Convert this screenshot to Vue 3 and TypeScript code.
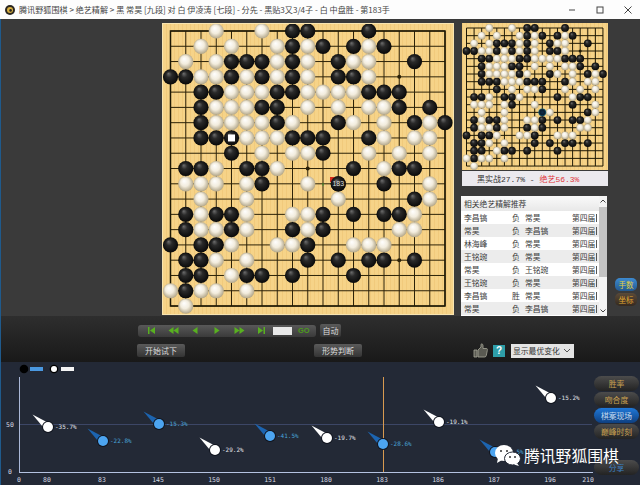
<script setup lang="ts">
const B: number[][] = [
  [8,9,13],[8,10,12,14],[4,5,6,8,11,16],[0,1,4,6,8,11,12],[2,3,7,8,13,14,15],
  [2,6,7,15,17],[2,7,11,16,18],[2,3,4,8,9,10,13],[4,10],[1,2,5,6,12,15,16],
  [6,11,14],[16],[1,3,4,10,12,14,15],[1,4,8,10],[0,2,3,9],
  [1,2,9,11,13,14,16],[1,2,5,6,8,12],[1],[]
]
const W: number[][] = [
  [3,6],[2,4,7,9,13],[1,3,7,9,12,13],[2,3,5,7,9,13],[4,5,6,9,10,11,12],
  [3,4,5,9,11,13,14],[3,4,5,6,8,12,14,17],[5,6,7,14,16,17],[6,8,9,13,15,17],[3,7,14],
  [1,2,3,5,9,17],[2,5,11,17],[2,5,8,9,16],[2,3,5,9,15,16],[4,7,8,12,13,14],
  [3,5],[4],[0,2,3,5],[1]
]
type Stone = { c: number; r: number; k: string }
const stones: Stone[] = []
B.forEach((row, r) => row.forEach((c) => stones.push({ c, r, k: 'b' })))
W.forEach((row, r) => row.forEach((c) => stones.push({ c, r, k: 'w' })))
const miniStones = stones.filter((s) => !(s.c === 11 && s.r === 10))

const idx = Array.from({ length: 19 }, (_, i) => i)
const stars: [number, number][] = []
for (const a of [3, 9, 15]) for (const b of [3, 9, 15]) stars.push([a, b])

const bx = (c: number) => 8.5 + c * 15.25
const by = (r: number) => 8 + r * 15.28
const mx = (c: number) => 4.5 + c * 7.58
const my = (r: number) => 5 + r * 7.67

const rows = [
  ['李昌镐', '负', '常昊'], ['常昊', '负', '李昌镐'], ['林海峰', '负', '常昊'], ['王铭琬', '负', '常昊'],
  ['常昊', '负', '王铭琬'], ['王铭琬', '负', '常昊'], ['李昌镐', '胜', '常昊'], ['常昊', '负', '李昌镐']
]

const ticks: [string, number][] = [
  ['0', 19], ['80', 47], ['83', 102], ['145', 158], ['150', 214], ['151', 270],
  ['180', 326], ['183', 382], ['186', 438], ['187', 494], ['196', 550], ['210', 588]
]
const pins = [
  { x: 48, y: 65, t: '-35.7%', k: 'w' }, { x: 103, y: 79, t: '-22.8%', k: 'b' },
  { x: 159, y: 62, t: '-15.3%', k: 'b' }, { x: 215, y: 88, t: '-29.2%', k: 'w' },
  { x: 270, y: 74, t: '-41.5%', k: 'b' }, { x: 327, y: 76, t: '-19.7%', k: 'w' },
  { x: 383, y: 82, t: '-28.6%', k: 'b' }, { x: 439, y: 60, t: '-19.1%', k: 'w' },
  { x: 495, y: 90, t: '-24.5%', k: 'b' }, { x: 551, y: 36, t: '-15.2%', k: 'w' }
]
const wedge = (x: number, y: number) =>
  `${x - 15.5},${y - 12.5} ${x + 2.5},${y - 3} ${x - 2.5},${y + 3}`
</script>

<template>
  <div class="app">
    <header class="titlebar">
      <svg class="logo" width="10" height="10" viewBox="0 0 10 10">
        <circle cx="5" cy="5" r="5" fill="#2a2620" />
        <circle cx="5" cy="5" r="3" fill="#d8b040" />
        <circle cx="5.6" cy="5.4" r="1.3" fill="#2a2620" />
      </svg>
      <span class="title">腾讯野狐围棋 &gt; 绝艺精解 &gt; 黑 常昊 [九段] 对 白 伊凌涛 [七段] - 分先 - 黑贴3又3/4子 - 白 中盘胜 - 第183手</span>
      <div class="winbtns">
        <svg width="8" height="8" viewBox="0 0 8 8"><path d="M1 4h6" stroke="#444" /></svg>
        <svg width="8" height="8" viewBox="0 0 8 8"><rect x="1" y="1" width="6" height="6" fill="none" stroke="#444" /></svg>
        <svg width="8" height="8" viewBox="0 0 8 8"><path d="M0.5 0.5l7 7M7.5 0.5l-7 7" stroke="#444" /></svg>
      </div>
    </header>

    <main class="main">
      <svg class="board" width="292" height="292" viewBox="0 0 292 292">
        <defs>
          <radialGradient id="gb" cx="50%" cy="50%" r="55%" fx="36%" fy="28%">
            <stop offset="0" stop-color="#6e6e6e" />
            <stop offset="0.35" stop-color="#2a2a2a" />
            <stop offset="1" stop-color="#050505" />
          </radialGradient>
          <radialGradient id="gw" cx="50%" cy="50%" r="55%" fx="38%" fy="30%">
            <stop offset="0" stop-color="#ffffff" />
            <stop offset="0.5" stop-color="#f2ecdd" />
            <stop offset="1" stop-color="#a99c7c" />
          </radialGradient>
          <radialGradient id="gt" cx="50%" cy="50%" r="55%">
            <stop offset="0" stop-color="#0b2a4a" />
            <stop offset="0.6" stop-color="#0a1c2e" />
            <stop offset="1" stop-color="#1a7a9a" />
          </radialGradient>
          <pattern id="wood" width="4" height="4" patternUnits="userSpaceOnUse">
            <rect width="4" height="4" fill="#f6d388" />
            <rect width="1" height="4" fill="#f1ca7c" />
          </pattern>
        </defs>
        <rect width="292" height="292" fill="url(#wood)" />
        <g stroke="#2c2208" stroke-width="1">
          <line v-for="i in idx" :key="'v' + i" :x1="bx(i)" y1="8" :x2="bx(i)" y2="283" />
          <line v-for="i in idx" :key="'h' + i" x1="8.5" :y1="by(i)" x2="283" :y2="by(i)" />
        </g>
        <rect x="8.5" y="8" width="274.5" height="275" fill="none" stroke="#1e1804" stroke-width="1.5" />
        <circle v-for="s in stars" :key="s.join()" :cx="bx(s[0])" :cy="by(s[1])" r="2" fill="#2c2208" />
        <circle
          v-for="s in stones"
          :key="s.c + '-' + s.r"
          :cx="bx(s.c)"
          :cy="by(s.r)"
          r="7.6"
          :fill="s.k === 'b' ? 'url(#gb)' : 'url(#gw)'"
        />
        <rect :x="bx(4) - 3.5" :y="by(7) - 3.5" width="7" height="7" fill="#fff" />
        <rect x="168" y="154" width="5" height="5" fill="#d42a1a" />
        <circle :cx="bx(11)" :cy="by(10)" r="7.6" fill="url(#gb)" />
        <text :x="bx(11)" :y="by(10) + 2.5" class="movenum">183</text>
        <line x1="161" y1="160" x2="161" y2="163" stroke="#4a9a30" />
      </svg>

      <aside class="side">
        <div class="mini">
          <svg class="miniboard" width="146" height="147" viewBox="0 0 146 147">
            <rect width="146" height="147" fill="url(#wood)" />
            <g stroke="#1e1804" stroke-width="1">
              <line v-for="i in idx" :key="'mv' + i" :x1="mx(i)" y1="5" :x2="mx(i)" y2="143" />
              <line v-for="i in idx" :key="'mh' + i" x1="4.5" :y1="my(i)" x2="141" :y2="my(i)" />
            </g>
            <circle v-for="s in stars" :key="s.join()" :cx="mx(s[0])" :cy="my(s[1])" r="1.5" fill="#1e1804" />
            <circle
              v-for="s in miniStones"
              :key="s.c + '-' + s.r"
              :cx="mx(s.c)"
              :cy="my(s.r)"
              r="3.9"
              :fill="s.k === 'b' ? 'url(#gb)' : 'url(#gw)'"
            />
            <circle :cx="mx(10)" :cy="my(11)" r="3.9" fill="url(#gt)" />
          </svg>
          <div class="caption">黑实战27.7% - <span class="red">绝艺56.3%</span></div>
        </div>

        <div class="list">
          <div class="listbody">
            <div class="listhead">相关绝艺精解推荐</div>
            <div v-for="(r, i) in rows" :key="i" class="row">
              <span class="c1">{{ r[0] }}</span>
              <span class="c2">{{ r[1] }}</span>
              <span class="c3">{{ r[2] }}</span>
              <span class="c4">第四届</span>
            </div>
          </div>
          <div class="scroll">
            <svg width="8" height="11" viewBox="0 0 8 11"><path d="M1.5 6.5L4 4l2.5 2.5" fill="none" stroke="#444" /></svg>
            <div class="thumb"></div>
            <svg class="down" width="8" height="11" viewBox="0 0 8 11"><path d="M1.5 4.5L4 7l2.5-2.5" fill="none" stroke="#444" /></svg>
          </div>
        </div>
      </aside>

      <div class="sidepills">
        <div class="mpill blue">手数</div>
        <div class="mpill gold">坐标</div>
      </div>
    </main>

    <section class="controls">
      <div class="ctl1">
        <div class="transport">
          <span class="tb"><svg width="9" height="7" viewBox="0 0 9 7"><path d="M1 0h1.5v7H1zM8 0v7L3 3.5z" /></svg></span>
          <span class="tb"><svg width="11" height="7" viewBox="0 0 11 7"><path d="M5.5 0v7L0.5 3.5zM10.5 0v7L5.5 3.5z" /></svg></span>
          <span class="tb"><svg width="6" height="7" viewBox="0 0 6 7"><path d="M5.5 0v7L0.5 3.5z" /></svg></span>
          <span class="tb"><svg width="6" height="7" viewBox="0 0 6 7"><path d="M0.5 0v7l5-3.5z" /></svg></span>
          <span class="tb"><svg width="11" height="7" viewBox="0 0 11 7"><path d="M0.5 0v7l5-3.5zM5.5 0v7l5-3.5z" /></svg></span>
          <span class="tb"><svg width="9" height="7" viewBox="0 0 9 7"><path d="M1 0v7l5-3.5zM6.5 0H8v7H6.5z" /></svg></span>
          <span class="num"></span>
          <span class="go">GO</span>
        </div>
        <span class="btn auto">自动</span>
      </div>
      <div class="ctl2">
        <span class="btn wide">开始试下</span>
        <span class="btn wide judge">形势判断</span>
        <svg class="thumbup" width="15" height="15" viewBox="0 0 15 15">
          <path d="M1 7h3v7H1zM5 7l3-3V1.5C8 .6 10 .6 10 2.500V5.500h3.500c1 0 1 1 .8 2l-1 5c-.2 1-.8 1.500-1.800 1.500H5z" fill="#5a5a52" stroke="#a8a89a" stroke-width=".8" />
        </svg>
        <span class="help">?</span>
        <div class="select">
          <span>显示最优变化</span>
          <svg width="8" height="6" viewBox="0 0 8 6"><path d="M1 1l3 3 3-3" fill="none" stroke="#555" /></svg>
        </div>
      </div>
    </section>

    <section class="chartwrap">
      <svg class="chart" width="593" height="123" viewBox="0 0 593 123">
        <circle cx="24" cy="7" r="4.300" fill="#000" />
        <rect x="30" y="5" width="13" height="4" fill="#4a98e0" />
        <circle cx="54" cy="7" r="4.300" fill="#000" />
        <circle cx="54" cy="7" r="3" fill="#fff" />
        <rect x="61" y="5" width="13" height="4" fill="#f4f4f4" />

        <line x1="20" y1="62.500" x2="592" y2="62.500" stroke="#3c4666" />
        <line x1="19.500" y1="15" x2="19.500" y2="110" stroke="#aab8d8" />
        <line x1="19" y1="110.500" x2="593" y2="110.500" stroke="#b4c2e0" />
        <line x1="383.500" y1="15" x2="383.500" y2="110" stroke="#d89a50" />

        <text x="10" y="65" class="axis">50</text>
        <text x="10" y="111.500" class="axis">0</text>
        <text v-for="t in ticks" :key="t[0]" :x="t[1]" y="119.500" class="axis">{{ t[0] }}</text>

        <g v-for="p in pins" :key="p.x">
          <polygon :points="wedge(p.x, p.y)" :fill="p.k === 'w' ? '#fff' : '#1c64b0'" />
          <circle :cx="p.x" :cy="p.y" r="6" fill="#10141e" />
          <circle :cx="p.x" :cy="p.y" r="5" :fill="p.k === 'w' ? '#fff' : '#4ca4f0'" />
          <text :x="p.x + 7" :y="p.y + 2" class="pct" :class="{ bluet: p.k === 'b' }">{{ p.t }}</text>
        </g>
      </svg>
      <div class="pills">
        <div class="pill">胜率</div>
        <div class="pill">吻合度</div>
        <div class="pill active">棋案现场</div>
        <div class="pill">巅峰时刻</div>
        <div class="pill share">分享</div>
      </div>
      <div class="watermark">
        <svg width="26" height="21" viewBox="0 0 26 21">
          <ellipse cx="9" cy="8" rx="9" ry="8" fill="#fff" />
          <path d="M3 13l-1 5 5-3z" fill="#fff" />
          <circle cx="6" cy="6" r="1" fill="#333" />
          <circle cx="12" cy="6" r="1" fill="#333" />
          <ellipse cx="17.500" cy="13.500" rx="8" ry="6.500" fill="#fff" stroke="#232936" />
          <path d="M22 18l2 3-5-1.500z" fill="#fff" />
          <circle cx="15" cy="12" r="1" fill="#333" />
          <circle cx="20" cy="12" r="1" fill="#333" />
        </svg>
        <span>腾讯野狐围棋</span>
      </div>
    </section>
  </div>
</template>

<style>
html, body { margin: 0; background: #3a3a3a; }
</style>

<style scoped>
.app {
  position: relative;
  width: 640px;
  height: 485px;
  overflow: hidden;
  display: flex;
  flex-direction: column;
  background: #3a3a3a;
  font-family: "Noto Sans CJK SC", "Liberation Sans", sans-serif;
  font-size: 8px;
}
.app::after {
  content: "";
  position: absolute;
  inset: 19px auto 0 0;
  width: 1px;
  background: #1f5a8c;
}
.titlebar {
  height: 19px;
  background: #fdfdfd;
  display: flex;
  align-items: center;
  padding: 0 8px 0 5px;
  color: #454545;
  flex: none;
}
.logo { flex: none; }
.title { margin-left: 4px; font-size: 8.100px; white-space: nowrap; }
.winbtns {
  margin-left: auto;
  display: flex;
  gap: 20px;
}
.main {
  flex: none;
  height: 293px;
  padding: 4px 0 0 162px;
  display: flex;
  box-sizing: content-box;
}
.board { display: block; flex: none; outline: 1px solid #f8e4b0; outline-offset: -1px; }
.side {
  flex: none;
  width: 147px;
  margin-left: 7px;
  display: flex;
  flex-direction: column;
}
.mini { margin-left: 1px; width: 146px; }
.miniboard { display: block; }
.caption {
  height: 15px;
  margin-top: 1px;
  padding-left: 15px;
  background: #ebe9ee;
  color: #333;
  display: flex;
  align-items: center;
  white-space: pre;
  font-family: "Liberation Mono", "Noto Sans CJK SC", monospace;
  font-size: 8px;
}
.red { color: #e0383c; }
.list {
  margin-top: 10px;
  width: 146px;
  height: 120px;
  background: #fff;
  display: flex;
  color: #3a3a3a;
}
.listbody { width: 138px; overflow: hidden; }
.listhead {
  height: 15px;
  line-height: 15px;
  padding-left: 3px;
  background: linear-gradient(#fafafa, #e8e8e8);
  font-size: 7.800px;
}
.row {
  height: 13px;
  display: flex;
  align-items: center;
  white-space: nowrap;
  padding-left: 3px;
  font-size: 7.800px;
}
.row:nth-child(odd) { background: #ececec; }
.c1 { flex: none; width: 48px; }
.c2 { flex: none; width: 13px; }
.c3 { flex: none; width: 47px; }
.c4 { flex: none; padding-right: 1px; border-right: 1px solid #555; line-height: 8px; }
.scroll {
  width: 8px;
  background: #f4f4f4;
  display: flex;
  flex-direction: column;
}
.scroll svg { flex: none; display: block; }
.thumb { height: 70px; background: #c4c4c4; }
.down { margin-top: auto; }
.sidepills {
  flex: none;
  width: 24px;
  margin-left: 7px;
  align-self: flex-end;
  margin-bottom: 10px;
  display: flex;
  flex-direction: column;
  gap: 2px;
}
.mpill {
  height: 13px;
  width: 22px;
  border-radius: 5px;
  text-align: center;
  line-height: 13px;
  font-size: 7.500px;
}
.mpill.blue { background: linear-gradient(#3d8ad0, #24598e); color: #e0d040; }
.mpill.gold { background: linear-gradient(#5a4a38, #352a20); color: #e0a830; }
.controls {
  flex: none;
  height: 46px;
  background: linear-gradient(#2e2e2e, #191919);
  padding-top: 8px;
  box-sizing: border-box;
  display: flex;
  flex-direction: column;
}
.ctl1 {
  height: 13px;
  margin-left: 138px;
  display: flex;
  align-items: center;
}
.transport {
  width: 178px;
  height: 12px;
  box-sizing: border-box;
  padding-left: 2px;
  border-radius: 3px;
  background: linear-gradient(#585858, #3a3a3a);
  display: flex;
  align-items: center;
}
.tb { width: 22px; display: flex; justify-content: center; align-items: center; }
.tb svg { fill: #58b020; }
.num { width: 19px; height: 8px; background: #e8e8e8; margin-left: 1px; }
.go { color: #4c9a1c; font-size: 7.500px; margin-left: 6px; font-family: "Liberation Sans", sans-serif; font-weight: 700; }
.btn {
  display: flex;
  align-items: center;
  justify-content: center;
  background: linear-gradient(#5a5a5a, #343434);
  border-radius: 2px;
  color: #dcdcdc;
  font-size: 8px;
}
.auto { margin-left: 4px; width: 21px; height: 13px; }
.ctl2 {
  margin: 6px 0 0 137px;
  height: 15px;
  display: flex;
  align-items: center;
}
.wide { width: 48px; height: 13px; }
.judge { margin-left: 129px; }
.thumbup { margin-left: 111px; }
.help {
  margin-left: 5px;
  width: 12px;
  height: 12px;
  background: #2e9ea8;
  color: #fff;
  font: 700 10px/12px "Liberation Sans", sans-serif;
  text-align: center;
}
.select {
  margin-left: 6px;
  width: 63px;
  height: 14px;
  box-sizing: border-box;
  padding: 0 3px 0 2px;
  background: #e4e4e4;
  color: #333;
  display: flex;
  align-items: center;
  justify-content: space-between;
  font-size: 7.800px;
}
.chartwrap {
  position: relative;
  flex: 1;
  display: flex;
  background: #232936;
  min-height: 0;
}
.chart { display: block; flex: none; overflow: visible; }
.axis {
  fill: #d4d8e0;
  font: 6.500px "DejaVu Sans Mono", monospace;
  text-anchor: middle;
}
.pct {
  fill: #e2e6ea;
  font: 6px "DejaVu Sans Mono", monospace;
}
.bluet { fill: #48a4d8; }
.movenum {
  fill: #ddd;
  font: 7px "Liberation Sans", sans-serif;
  text-anchor: middle;
}
.pills {
  flex: 1;
  padding: 14px 1px 10px 1px;
  display: flex;
  flex-direction: column;
  gap: 1px;
  min-width: 0;
}
.pill {
  height: 15px;
  border-radius: 8px;
  background: linear-gradient(#4c4c4c, #232323);
  color: #c9a050;
  text-align: center;
  line-height: 15px;
  font-size: 7.800px;
  white-space: nowrap;
}
.pill.active {
  background: linear-gradient(#1f78d8, #0e3f80);
  color: #c4dcf0;
}
.pill.share { margin-top: auto; color: #3a7ec0; }
.watermark {
  position: absolute;
  left: 495px;
  top: 83px;
  display: flex;
  align-items: center;
  gap: 3px;
  color: #fff;
  font-size: 15.800px;
  line-height: 21px;
  white-space: nowrap;
  text-shadow: 0 0 2px #232936;
}
</style>
